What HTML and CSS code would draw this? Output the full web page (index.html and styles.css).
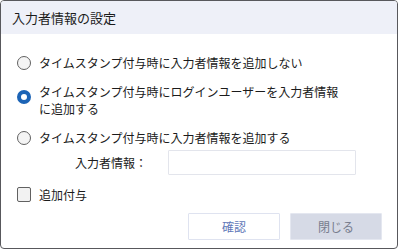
FILE: index.html
```html
<!DOCTYPE html>
<html lang="ja">

<head>
    <meta charset="UTF-8">
    <title>入力者情報の設定</title>
    <link rel="stylesheet" href="styles.css">
</head>

<body>

    <div class="dialog">
        <div class="dialog-header">入力者情報の設定</div>

        <div class="dialog-body">
            <label class="option">
                <span class="radio"></span>
                <span class="option-text">タイムスタンプ付与時に入力者情報を追加しない</span>
            </label>
            <label class="option option-multi">
                <span class="radio checked"></span>
                <span class="option-text">タイムスタンプ付与時にログインユーザーを入力者情報に追加する</span>
            </label>
            <label class="option">
                <span class="radio"></span>
                <span class="option-text">タイムスタンプ付与時に入力者情報を追加する</span>
            </label>

            <div class="field">
                <span class="field-label">入力者情報：</span>
                <input class="field-input" type="text">
            </div>

            <label class="option option-check">
                <span class="checkbox"></span>
                <span class="option-text">追加付与</span>
            </label>

            <div class="buttons">
                <button class="btn btn-ok">確認</button>
                <button class="btn btn-close">閉じる</button>
            </div>
        </div>
    </div>

</body>

</html>
```

FILE: styles.css
```css
body {
    margin: 0;
    background: #ffffff;
    font-family: "Noto Sans CJK JP", "Noto Sans", sans-serif;
    color: #1b1b1b;
}

.dialog {
    width: 398px;
    height: 249px;
    box-sizing: border-box;
    border: 1px solid #58585c;
    border-radius: 4px;
    overflow: hidden;
    background: #ffffff;
}

.dialog-header {
    height: 33px;
    padding-left: 11px;
    display: flex;
    align-items: center;
    background: #eef0f8;
    font-size: 13px;
}

.dialog-body {
    padding: 20px 15px 0 16px;
    display: flex;
    flex-direction: column;
}

.option {
    display: flex;
    align-items: flex-start;
    gap: 8px;
    font-size: 12px;
    line-height: 17px;
    margin-bottom: 12px;
}

.option-text {
    width: 305px;
}

.radio {
    width: 12px;
    height: 12px;
    margin-top: 2px;
    flex-shrink: 0;
    border: 1px solid #616161;
    border-radius: 50%;
    background: #f4f4f4;
}

.radio.checked {
    width: 6px;
    height: 6px;
    margin-top: 7px;
    border: 4px solid #1c64b6;
    background: #ffffff;
}

.field {
    display: flex;
    align-items: center;
    margin: -8px 0 11px 58px;
    font-size: 12px;
}

.field-label {
    width: 93px;
}

.field-input {
    width: 188px;
    height: 25px;
    box-sizing: border-box;
    border: 1px solid #e3e5ec;
    border-radius: 1px;
    outline: none;
}

.option-check {
    margin-bottom: 10px;
}

.checkbox {
    width: 12px;
    height: 13px;
    margin-top: 1px;
    flex-shrink: 0;
    border: 1px solid #616161;
    border-radius: 2px;
    background: #f2f2f2;
}

.buttons {
    display: flex;
    justify-content: flex-end;
    gap: 10px;
}

.btn {
    width: 92px;
    height: 27px;
    font-family: inherit;
    font-size: 12px;
    border-radius: 1px;
}

.btn-ok {
    background: #ffffff;
    border: 1px solid #dfe3f0;
    color: #5f78b8;
}

.btn-close {
    background: #d6dae6;
    border: 1px solid #e4e7f0;
    color: #787d8e;
}
```
